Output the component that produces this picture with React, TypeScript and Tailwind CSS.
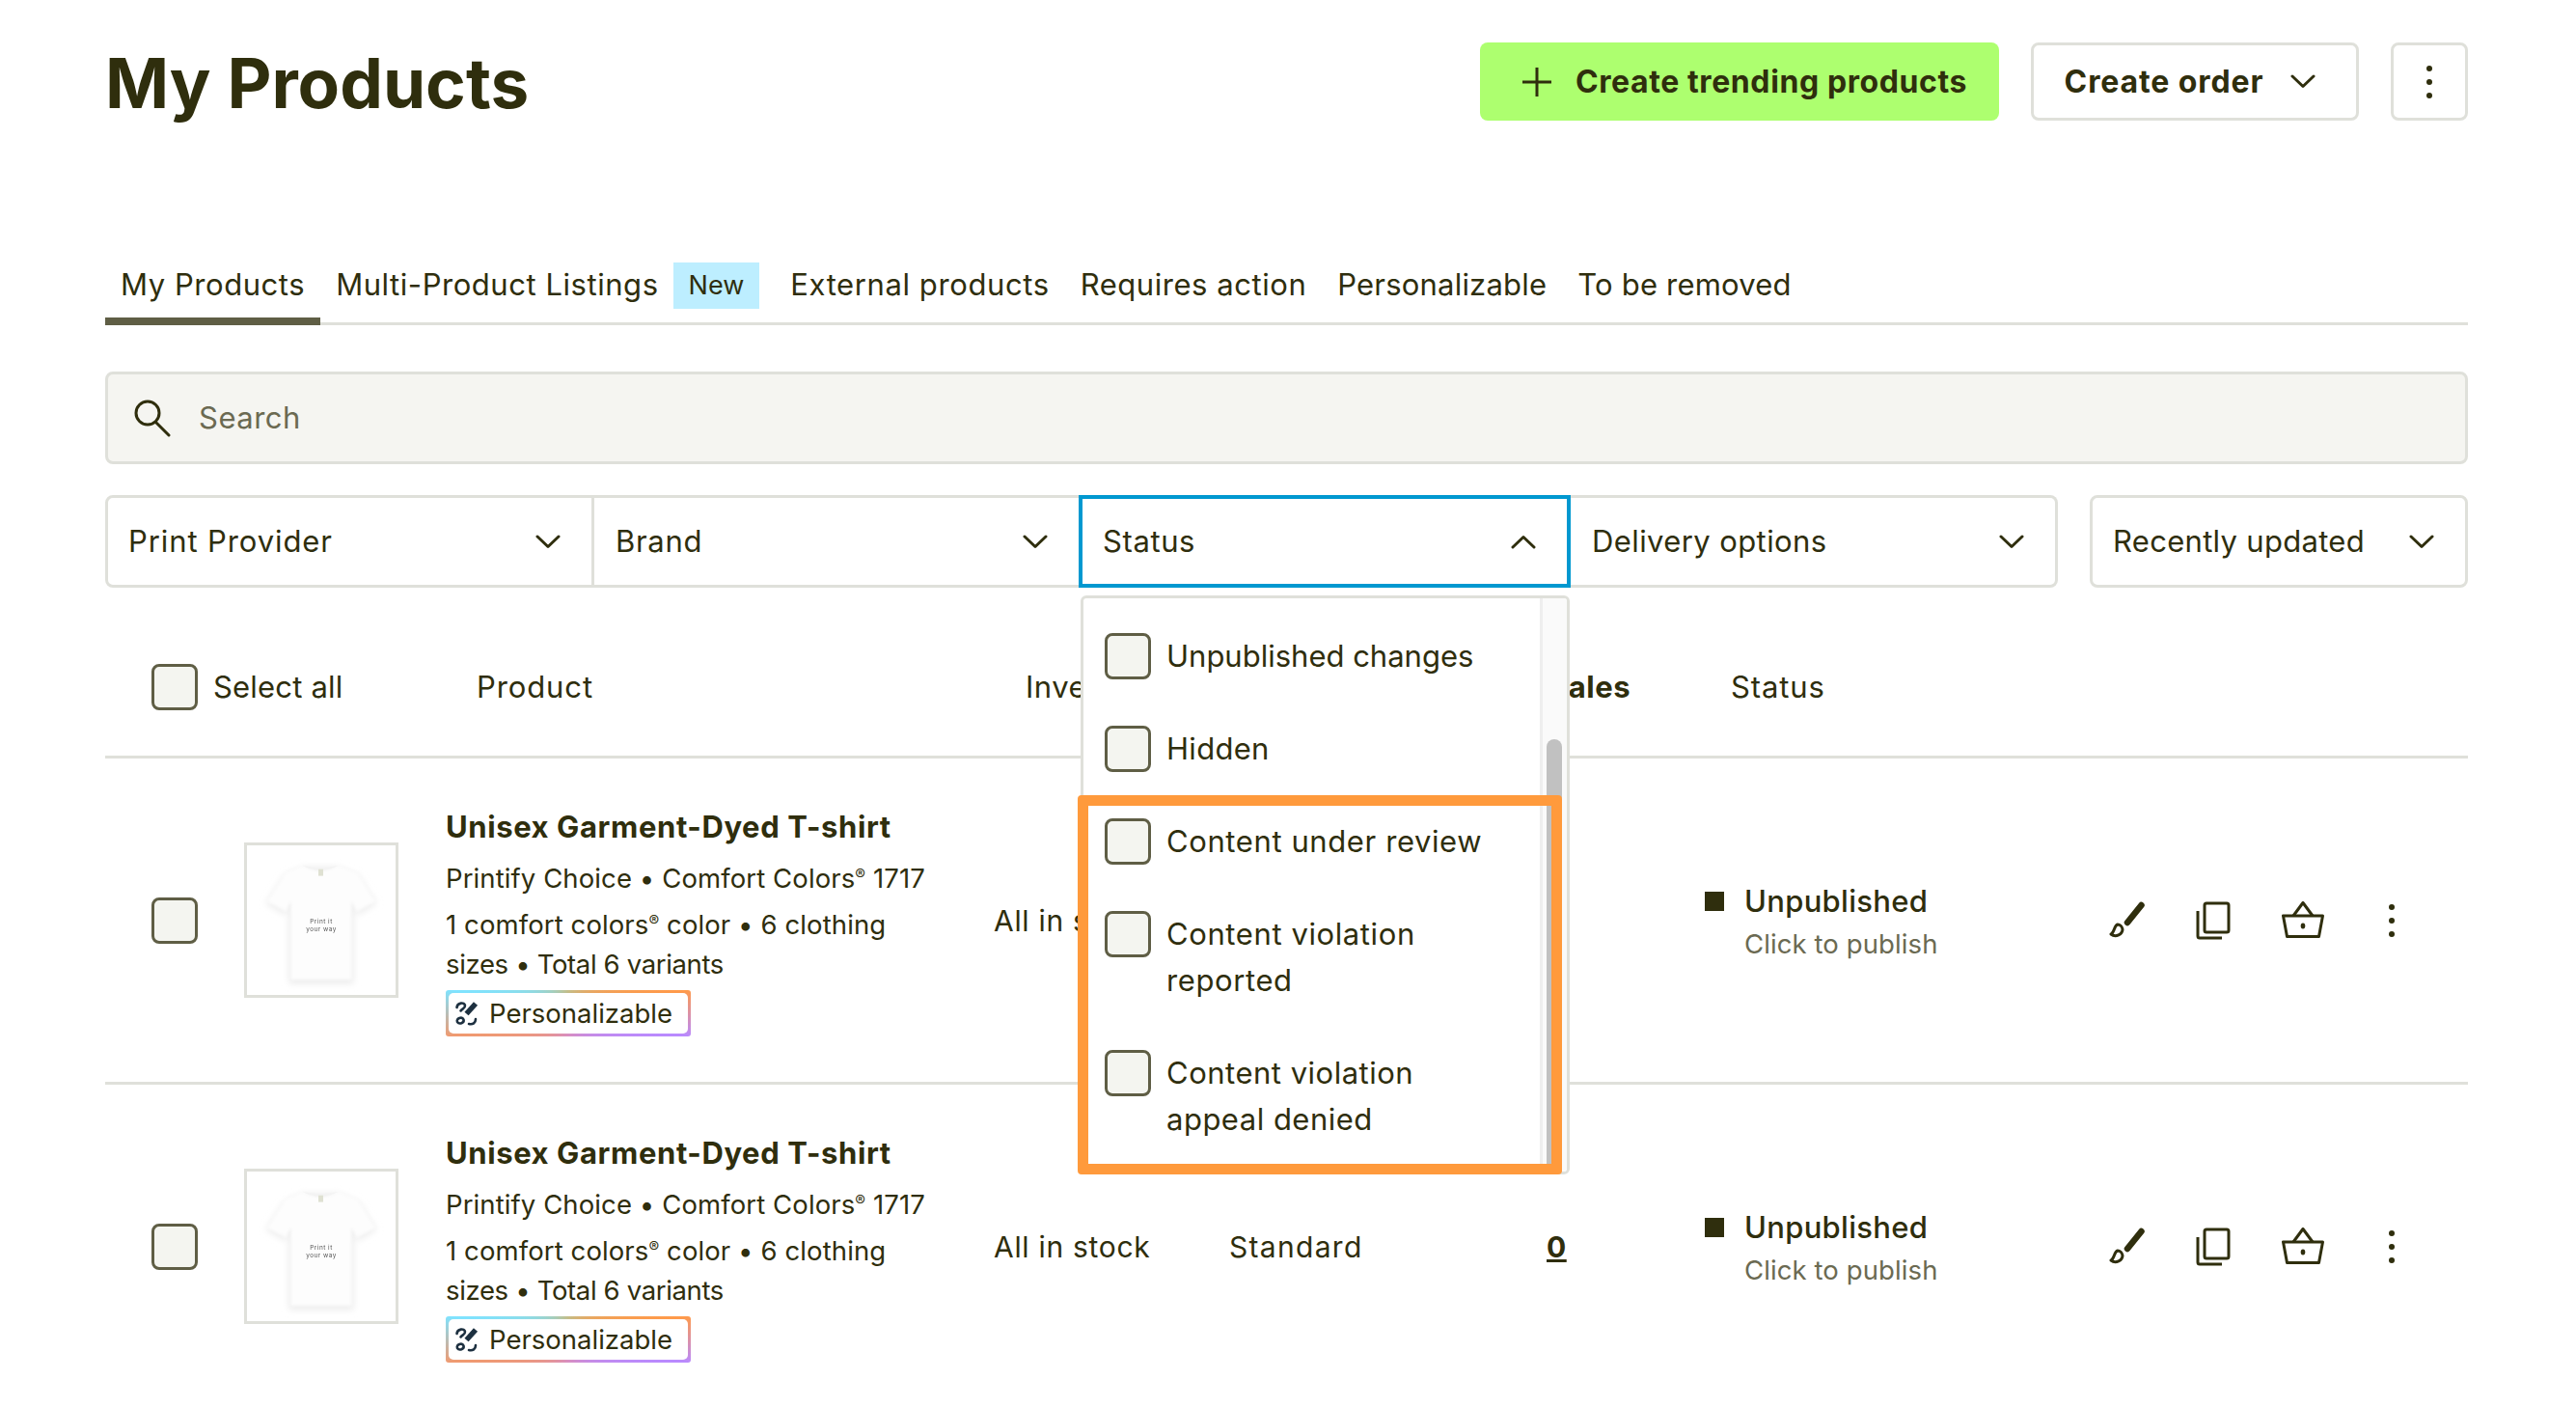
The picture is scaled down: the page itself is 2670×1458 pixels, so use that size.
import React from "react";

const Chevron = ({ up = false }: { up?: boolean }) => (
  <svg width="26" height="15" viewBox="0 0 26 15" fill="none" className="shrink-0">
    <path d={up ? "M2 13 L13 2.500 L24 13" : "M2 2 L13 12.500 L24 2"} stroke="#2f2e0d" strokeWidth="3" strokeLinecap="round" strokeLinejoin="round" />
  </svg>
);

const Check = ({ className = "" }: { className?: string }) => (
  <span className={"block h-[48px] w-[48px] shrink-0 rounded-[8px] border-[3px] border-[#5f5e45] bg-[#f4f5f0] " + className} />
);

const Dots = () => (
  <svg width="8" height="40" viewBox="0 0 8 40" className="shrink-0">
    <circle cx="4" cy="6" r="3" fill="#2f2e0d" />
    <circle cx="4" cy="20" r="3" fill="#2f2e0d" />
    <circle cx="4" cy="34" r="3" fill="#2f2e0d" />
  </svg>
);

const Shirt = () => (
  <svg width="154" height="155" viewBox="0 0 156 155">
    <defs>
      <filter id="soft" x="-20%" y="-20%" width="140%" height="140%">
        <feGaussianBlur stdDeviation="4" />
      </filter>
      <filter id="edge" x="-10%" y="-10%" width="120%" height="120%">
        <feGaussianBlur stdDeviation="1.500" />
      </filter>
      <filter id="tiny">
        <feGaussianBlur stdDeviation="0.35" />
      </filter>
    </defs>
    <path d="M58 22 L96 22 L116 30 L136 60 L116 72 L112 62 L112 144 L44 144 L44 62 L40 72 L20 60 L40 30 Z" fill="#ececec" filter="url(#soft)" />
    <path d="M58 20 Q77 30 96 20 L116 28 L135 58 L115 69 L110 58 L110 140 L46 140 L46 58 L41 69 L21 58 L40 28 Z" fill="#fdfdfd" filter="url(#edge)" />
    <path d="M58 20 Q77 30 96 20 Q77 25 58 20" fill="#f3f3f3" />
    <rect x="75" y="24" width="5" height="7" fill="#dfe1d2" filter="url(#tiny)" />
    <g filter="url(#tiny)" fill="#555555" fontFamily="Inter, sans-serif" fontSize="6.5" textAnchor="middle">
      <text x="78" y="81">Print it</text>
      <text x="78" y="89">your way</text>
    </g>
  </svg>
);

const PersonalIcon = () => (
  <svg width="26" height="28" viewBox="0 0 26 28" fill="none" className="shrink-0" stroke="#1d3040" strokeLinecap="round">
    <path d="M2.500 8 C3 3 10.500 2 11 6 C11.300 9 8 9 6.500 11.500" strokeWidth="2.600" />
    <path d="M22 4 L12.500 14.500" strokeWidth="5.500" strokeLinecap="butt" />
    <path d="M3 23 C1.500 19 8 17 9.500 20.500 C10.500 24 5 26 3 23 Z" strokeWidth="2.600" />
    <path d="M15 25 C19 26 22 24 22 20" strokeWidth="2.600" />
  </svg>
);

const Brush = () => (
  <svg width="40" height="40" viewBox="0 0 40 40" fill="none" className="shrink-0">
    <path d="M33.500 4 L19 22" stroke="#2f2e0d" strokeWidth="6.500" strokeLinecap="round" />
    <path d="M9 24 C5 25 6 32 2 34 C7 38 14 34 14 29 C13.500 26 11 24 9 24 Z" stroke="#2f2e0d" strokeWidth="3" strokeLinejoin="round" />
  </svg>
);

const Copy = () => (
  <svg width="36" height="40" viewBox="0 0 36 40" fill="none" className="shrink-0" stroke="#2f2e0d" strokeWidth="3">
    <rect x="9" y="2" width="25" height="30" rx="2" />
    <path d="M2 10 V36 a2 2 0 0 0 2 2 H27" />
  </svg>
);

const Basket = () => (
  <svg width="44" height="40" viewBox="0 0 44 40" fill="none" className="shrink-0" stroke="#2f2e0d" strokeWidth="3" strokeLinejoin="round">
    <path d="M1.500 15 H42.500 L38.500 36.500 H5.500 Z" />
    <path d="M12 15 L22 1.500 L32 15" />
    <ellipse cx="22" cy="25.500" rx="2.300" ry="3" fill="#2f2e0d" stroke="none" />
  </svg>
);

const FilterCell = ({ label, spacing, first = false, last = false }: { label: string; spacing: string; first?: boolean; last?: boolean }) => (
  <div
    className={
      "flex h-full flex-1 items-center justify-between border-y-[3px] border-r-[3px] border-[#dfe0da] pr-[32px] " +
      (first ? "rounded-l-[8px] border-l-[3px] pl-[21px] " : "pl-[22px] ") +
      (last ? "rounded-r-[8px]" : "")
    }
  >
    <span className={spacing}>{label}</span>
    <Chevron />
  </div>
);

const Reg = () => <sup className="text-[16px] leading-[16px]">®</sup>;

const ProductRow = () => (
  <div className="flex h-[338px] items-center border-b-[3px] border-[#dfe0da] pl-[48px]">
    <Check />
    <div className="ml-[48px] flex h-[161px] w-[160px] shrink-0 items-center justify-center border-[3px] border-[#dfe0da]">
      <Shirt />
    </div>
    <div className="ml-[49px] w-[568px] shrink-0 pt-[2px]">
      <div className="text-[31px] font-bold leading-[44px] tracking-[0.6px]">Unisex Garment-Dyed T-shirt</div>
      <div className="mt-[11px] text-[27.5px] leading-[40px] tracking-[0.1px]">Printify Choice • Comfort Colors<Reg /> 1717</div>
      <div className="mt-[8px] text-[27.5px] leading-[41px] tracking-[0.1px]">1 comfort colors<Reg /> color • 6 clothing</div>
      <div className="text-[27.5px] leading-[41px] tracking-[-0.35px]">sizes • Total 6 variants</div>
      <div className="mt-[6px] w-[254px] rounded-[3px] bg-[conic-gradient(#c4bd88_0deg,#ff9a4a_79deg,#b98aff_101deg,#d88ec0_180deg,#f09a70_259deg,#7fe3ff_281deg,#c4bd88_360deg)] p-[3px]">
        <div className="flex h-[42px] items-center gap-[10px] rounded-[5px] bg-white pl-[6px] text-[27.5px] tracking-[0px]">
          <PersonalIcon />
          <span>Personalizable</span>
        </div>
      </div>
    </div>
    <div className="w-[244px] shrink-0 text-[30px] tracking-[0.7px]">All in stock</div>
    <div className="w-[329px] shrink-0 text-[30px] tracking-[1.3px]">Standard</div>
    <div className="w-[164px] shrink-0 text-[30px] font-bold underline">0</div>
    <div className="mt-[6px] flex w-[419px] shrink-0 items-start gap-[21px]">
      <span className="mt-[11px] block h-[20px] w-[20px] bg-[#2f2e0d]" />
      <div className="-mt-[1px]">
        <div className="text-[31px] font-medium leading-[44px] tracking-[0.3px]">Unpublished</div>
        <div className="text-[27.5px] leading-[44px] tracking-[0.1px] text-[#6b6a52]">Click to publish</div>
      </div>
    </div>
    <Brush />
    <div className="ml-[50px]"><Copy /></div>
    <div className="ml-[53px]"><Basket /></div>
    <div className="ml-[66px]"><Dots /></div>
  </div>
);

const Option = ({ text, spacing }: { text: string; spacing: string }) => (
  <div className="flex items-start gap-[16px]">
    <Check />
    <span className={"w-[345px] leading-[48px] " + spacing}>{text}</span>
  </div>
);

export default function App() {
  return (
    <div className="h-[1458px] w-[2670px] overflow-hidden bg-white text-[31px] leading-[40px] tracking-[0.5px] text-[#2f2e0d] [font-family:Inter,sans-serif]">
      <div className="pl-[109px] pr-[112px] pt-[44px]">
        <div className="flex h-[81px] items-center justify-between">
          <h1 className="mt-[4px] text-[71px] font-bold leading-[81px] tracking-[0px]">My Products</h1>
          <div className="flex h-full items-stretch">
            <button className="flex w-[538px] items-center justify-center gap-[24px] rounded-[8px] bg-[#adff6f] pl-[10px] text-[32px] font-bold tracking-[0.6px]">
              <svg width="32" height="32" viewBox="0 0 32 32" fill="none" stroke="#2f2e0d" strokeWidth="3">
                <path d="M16 1 V31 M1 16 H31" />
              </svg>
              Create trending products
            </button>
            <button className="ml-[33px] flex w-[340px] items-center justify-center gap-[28px] rounded-[8px] border-[3px] border-[#dfe0da] pr-[10px] text-[32px] font-bold tracking-[0.9px]">
              Create order
              <Chevron />
            </button>
            <button className="ml-[33px] flex w-[80px] items-center justify-center rounded-[8px] border-[3px] border-[#dfe0da]">
              <Dots />
            </button>
          </div>
        </div>

        <div className="mt-[142px] flex h-[70px] items-stretch border-b-[3px] border-[#dfe0da] text-[31px] tracking-[0.55px]">
          <div className="-mb-[3px] border-b-[8px] border-[#5f5e45] px-[16px] pt-[8px]">My Products</div>
          <div className="pl-[16px] pr-[15px] pt-[8px]">Multi-Product Listings</div>
          <div className="mt-[5px] h-[48px] bg-[#bdeeff] px-[16px] pt-[4px] text-[27px] tracking-[0px]">New</div>
          <div className="pl-[32px] pr-[16px] pt-[8px] tracking-[0.6px]">External products</div>
          <div className="px-[16px] pt-[8px]">Requires action</div>
          <div className="px-[16px] pt-[8px] tracking-[0.2px]">Personalizable</div>
          <div className="px-[16px] pt-[8px] tracking-[0.2px]">To be removed</div>
        </div>

        <div className="mt-[48px] flex h-[96px] items-center gap-[28px] rounded-[8px] border-[3px] border-[#dfe0da] bg-[#f5f5f1] pl-[26px] text-[#6b6a52]">
          <svg width="40" height="40" viewBox="0 0 40 40" fill="none" stroke="#2f2e0d" strokeWidth="3" strokeLinecap="round">
            <circle cx="15" cy="15" r="12" />
            <path d="M24 25 L37 38" />
          </svg>
          <span>Search</span>
        </div>

        <div className="relative mt-[32px] flex h-[96px]">
          <div className="flex h-full w-[2024px]">
            <FilterCell label="Print Provider" first spacing="tracking-[0.9px]" />
            <FilterCell label="Brand" spacing="tracking-[0.7px]" />
            <div className="-ml-[3px] flex h-full w-[510px] shrink-0 items-center justify-between border-[4px] border-[#0098d0] pl-[21px] pr-[32px]">
              <span className="tracking-[0.6px]">Status</span>
              <Chevron up />
            </div>
            <FilterCell label="Delivery options" last spacing="tracking-[0.4px]" />
          </div>
          <div className="ml-[33px] flex h-full flex-1 items-center justify-between rounded-[8px] border-[3px] border-[#dfe0da] pl-[21px] pr-[32px]">
            <span className="tracking-[0.3px]">Recently updated</span>
            <Chevron />
          </div>

          <div className="absolute left-[1011px] top-[104px] z-10 flex h-[600px] w-[507px] overflow-hidden rounded-[6px] border-[3px] border-[#dfe0da] bg-white">
            <div className="flex flex-1 flex-col gap-[48px] pl-[22px] pt-[36px]">
              <Option text="Unpublished changes" spacing="tracking-[0px]" />
              <Option text="Hidden" spacing="tracking-[0.3px]" />
              <Option text="Content under review" spacing="tracking-[0.6px]" />
              <Option text="Content violation reported" spacing="tracking-[0.6px]" />
              <Option text="Content violation appeal denied" spacing="tracking-[0.5px]" />
            </div>
            <div className="w-[28px] shrink-0 border-l-[3px] border-[#eeeeee] bg-[#fafafa] pl-[4px] pt-[146px]">
              <div className="h-full w-[16px] rounded-t-[8px] bg-[#c1c1c1]" />
            </div>
          </div>
          <div className="absolute left-[1008px] top-[311px] z-20 h-[393px] w-[502px] rounded-[4px] border-[11px] border-[#ff9a3c]" />
        </div>

        <div className="flex h-[177px] items-center border-b-[3px] border-[#dfe0da] pl-[48px] pt-[31px]">
          <div className="flex w-[337px] shrink-0 items-center gap-[16px]">
            <Check />
            <span className="tracking-[0.2px]">Select all</span>
          </div>
          <div className="w-[569px] shrink-0 tracking-[0.9px]">Product</div>
          <div className="w-[542px] shrink-0">Inventory</div>
          <div className="w-[189px] shrink-0 font-bold">Sales</div>
          <div className="tracking-[0.9px]">Status</div>
        </div>

        <ProductRow />
        <ProductRow />
      </div>
    </div>
  );
}
